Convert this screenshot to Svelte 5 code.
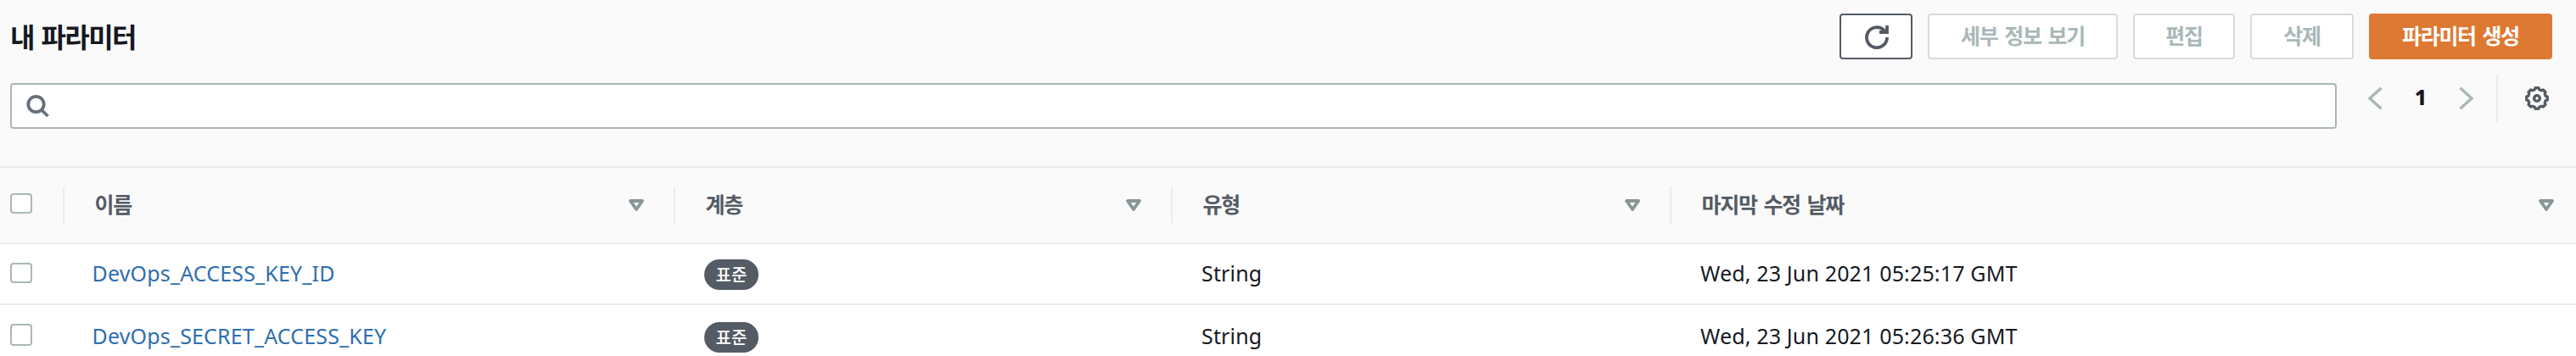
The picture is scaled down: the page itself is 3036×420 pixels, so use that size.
<script>
  const columns = [
    { key: 'name', label: '이름' },
    { key: 'tier', label: '계층' },
    { key: 'type', label: '유형' },
    { key: 'modified', label: '마지막 수정 날짜' }
  ];
  const rows = [
    { name: 'DevOps_ACCESS_KEY_ID', tier: '표준', type: 'String', modified: 'Wed, 23 Jun 2021 05:25:17 GMT' },
    { name: 'DevOps_SECRET_ACCESS_KEY', tier: '표준', type: 'String', modified: 'Wed, 23 Jun 2021 05:26:36 GMT' }
  ];

  // Eight-toothed gear outline centred on (14, 14).
  const point = (deg, r) => {
    const a = (deg * Math.PI) / 180;
    return `${(14 + r * Math.cos(a)).toFixed(2)},${(14 + r * Math.sin(a)).toFixed(2)}`;
  };
  const gear = Array.from({ length: 8 }, (_, i) => i * 45)
    .flatMap((d) => [point(d - 9, 12.4), point(d + 9, 12.4), point(d + 15, 10.6), point(d + 30, 10.6)])
    .join(' ');
</script>

<main class="panel">
  <header class="top">
    <h2>내 파라미터</h2>
    <div class="actions">
      <button class="btn refresh" aria-label="refresh">
        <svg width="28" height="28" viewBox="0 0 28 28" fill="none" stroke="currentColor" stroke-width="3.8">
          <path d="M26 14A12 12 0 1 1 22.4 5.6L25 8.4" />
          <path d="M26 0V8H17" />
        </svg>
      </button>
      <button class="btn details" disabled>세부 정보 보기</button>
      <button class="btn edit" disabled>편집</button>
      <button class="btn delete" disabled>삭제</button>
      <button class="btn primary">파라미터 생성</button>
    </div>
  </header>

  <div class="tools">
    <div class="search">
      <svg width="28" height="28" viewBox="0 0 28 28" fill="none" stroke="currentColor" stroke-width="3.8">
        <circle cx="11.5" cy="12" r="9.2" />
        <path d="M17.6 18.4L25.5 26" />
      </svg>
    </div>
    <nav class="pages">
      <svg width="18" height="28" viewBox="0 0 18 28" fill="none" stroke="currentColor" stroke-width="3.4"><path d="M16.5 1.8L3 14L16.5 26.2" /></svg>
      <span class="page">1</span>
      <svg width="18" height="28" viewBox="0 0 18 28" fill="none" stroke="currentColor" stroke-width="3.4"><path d="M1.5 1.8L15 14L1.5 26.2" /></svg>
    </nav>
    <div class="settings">
      <svg width="28" height="28" viewBox="0 0 28 28" fill="none" stroke="currentColor">
        <polygon points={gear} stroke-width="3.3" stroke-linejoin="round" />
        <circle cx="14" cy="14" r="3.4" stroke-width="3.4" />
      </svg>
    </div>
  </div>

  <section class="table">
    <div class="row head">
      <div class="cell check"><span class="box"></span></div>
      {#each columns as col}
        <div class="cell {col.key}">
          <span class="label">{col.label}</span>
          <svg width="18" height="14" viewBox="0 0 18 14" fill="none" stroke="currentColor" stroke-width="3.8" stroke-linejoin="round"><path d="M2 2H16L9 12Z" /></svg>
        </div>
      {/each}
    </div>
    {#each rows as row}
      <div class="row body">
        <div class="cell check"><span class="box"></span></div>
        <div class="cell name"><span class="text link">{row.name}</span></div>
        <div class="cell tier"><span class="badge">{row.tier}</span></div>
        <div class="cell type"><span class="text">{row.type}</span></div>
        <div class="cell modified"><span class="text">{row.modified}</span></div>
      </div>
    {/each}
  </section>
</main>

<style>
  :global(body) { background: #fff; }
  * { box-sizing: border-box; }
  .panel {
    width: 3036px;
    height: 420px;
    overflow: hidden;
    background: #fff;
    color: #16191f;
    font-family: "Noto Sans", "Noto Sans CJK KR", sans-serif;
    font-size: 25px;
    letter-spacing: 0.16px;
  }
  svg { display: block; flex: none; }
  .top {
    display: flex;
    justify-content: space-between;
    height: 98px;
    padding: 16px 28px 0 12px;
    background: #fafafa;
  }
  h2 {
    margin: 0;
    font: 700 32px/52px "Noto Sans CJK KR", sans-serif;
    letter-spacing: -1.6px;
    word-spacing: 3px;
    white-space: pre;
  }
  .actions { display: flex; gap: 18px; }
  .btn {
    display: flex;
    align-items: center;
    justify-content: center;
    height: 54px;
    padding: 0 0 3px;
    border: 2px solid #d5dbdb;
    border-radius: 4px;
    background: #fff;
    color: #aab7b8;
    font: 700 25px/47px "Noto Sans CJK KR", sans-serif;
    letter-spacing: -1.3px;
    word-spacing: 3.4px;
    white-space: nowrap;
  }
  .refresh { width: 86px; padding: 1px 0 0 2px; border-color: #545b64; color: #545b64; }
  .details { width: 224px; }
  .edit { width: 120px; }
  .delete { width: 122px; }
  .primary { width: 216px; border-color: #dd7932; background: #dd7932; color: #fff; }
  .tools {
    display: flex;
    height: 98px;
    padding-left: 12px;
    background: #fafafa;
  }
  .search {
    display: flex;
    align-items: center;
    width: 2742px;
    height: 54px;
    padding-left: 17px;
    border: 2px solid #aab7b8;
    border-radius: 4px;
    background: #fff;
    color: #687078;
  }
  .pages {
    display: flex;
    justify-content: space-between;
    align-items: center;
    width: 126px;
    height: 36px;
    margin-left: 36px;
    color: #aab7b8;
  }
  .page { padding-bottom: 3px; color: #16191f; font-weight: 800; line-height: 33px; }
  .settings {
    height: 56px;
    margin: -10px 0 0 26px;
    padding: 14px 0 0 32px;
    border-left: 2px solid #eaeded;
    color: #545b64;
  }
  .row { display: grid; grid-template-columns: 76px 720px 586px 588px 1066px; }
  .cell { display: flex; align-items: center; padding-left: 34px; }
  .cell.check { padding-left: 12px; }
  .box { width: 26px; height: 24px; border: 2px solid #aab7b8; border-radius: 4px; background: #fff; }
  .head {
    height: 92px;
    border-top: 2px solid #eaeded;
    border-bottom: 2px solid #eaeded;
    background: #fafafa;
    color: #545b64;
  }
  .head .cell {
    justify-content: space-between;
    height: 44px;
    margin-top: 22px;
    padding-right: 35px;
    border-right: 2px solid #eaeded;
  }
  .head .modified { padding-right: 26px; border-right: 0; }
  .head .cell svg { color: #879596; }
  .head .box { margin-top: -4px; flex: none; }
  .label {
    margin: -4px 0 0 1.5px;
    font: 700 25px/44px "Noto Sans CJK KR", sans-serif;
    letter-spacing: -1.3px;
    word-spacing: 3.4px;
    white-space: nowrap;
  }
  .body { height: 72px; border-bottom: 2px solid #eaeded; }
  .body .box { margin-bottom: 2px; }
  .body:last-child { height: 76px; }
  .body:last-child .box { height: 26px; margin-bottom: 4px; }
  .text { padding-bottom: 2px; }
  .link { margin-left: -1.5px; color: #2f6eb0; }
  .badge {
    display: flex;
    align-items: center;
    justify-content: center;
    width: 64px;
    height: 36px;
    margin-top: 2px;
    border-radius: 18px;
    background: #545b64;
    color: #fff;
    font: 500 20px/36px "Noto Sans CJK KR", sans-serif;
  }
</style>
